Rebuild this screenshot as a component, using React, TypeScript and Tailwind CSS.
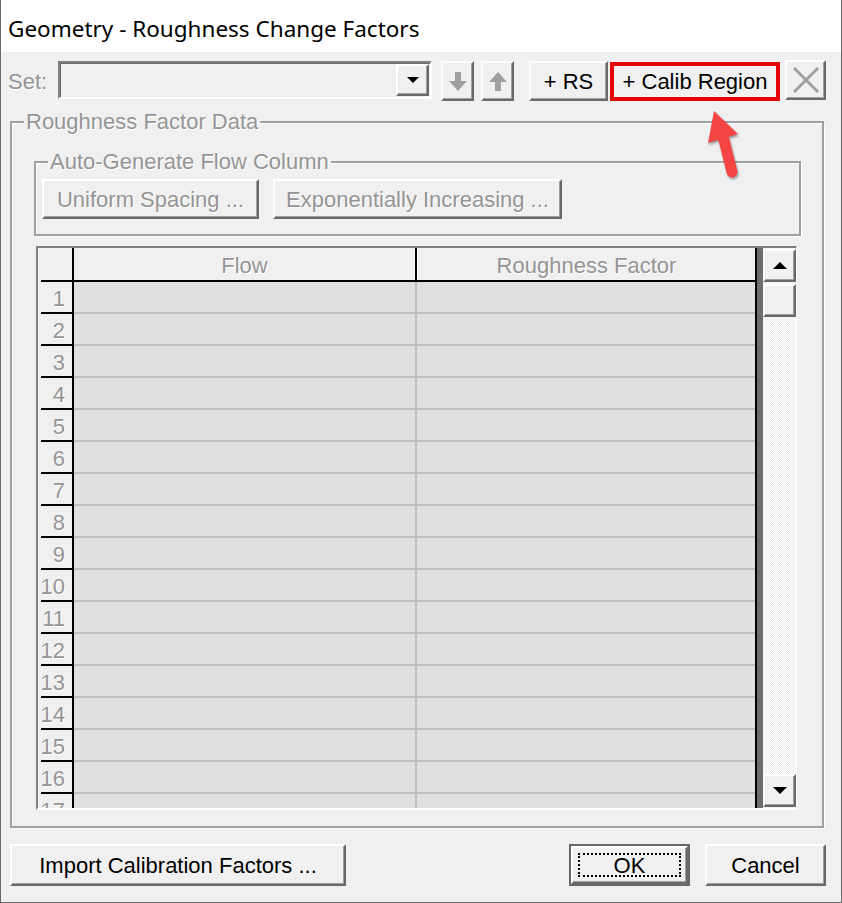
import type { ReactNode } from "react";

// Classic Win32 dialog: etched group boxes, 3D buttons, a disabled data grid.

const raised =
  "border-2 border-t-white border-l-white border-b-[#696969] border-r-[#696969] bg-[#f0f0f0] shadow-[inset_-1px_-1px_0_#a0a0a0]";

const dim = "text-[#959595] [text-shadow:1px_1px_0_#ffffff]";

function Btn({
  className = "",
  children,
}: {
  className?: string;
  children?: ReactNode;
}) {
  return (
    <div className={`flex items-center justify-center ${raised} ${className}`}>
      {children}
    </div>
  );
}

function Tri({ up = false, w = 14 }: { up?: boolean; w?: number }) {
  const h = Math.round(w / 2);
  return (
    <svg width={w} height={h} viewBox={`0 0 ${w} ${h}`}>
      <polygon
        points={up ? `0,${h} ${w},${h} ${w / 2},0` : `0,0 ${w},0 ${w / 2},${h}`}
        fill="#000"
      />
    </svg>
  );
}

function ArrowGlyph({ up = false }: { up?: boolean }) {
  return (
    <svg width="18" height="19" viewBox="0 0 18 19" className={up ? "rotate-180" : ""}>
      <rect x="6" y="0" width="6" height="10" fill="#a0a0a0" />
      <polygon points="0,9 18,9 9,19" fill="#a0a0a0" />
    </svg>
  );
}

function Legend({ children, ml }: { children: ReactNode; ml: string }) {
  return (
    <div
      className={`-mt-[13px] ${ml} self-start bg-[#f0f0f0] px-[2px] leading-[24px] ${dim}`}
    >
      {children}
    </div>
  );
}

const ROWS = Array.from({ length: 17 }, (_, i) => i + 1);

function DataGrid() {
  return (
    <div className="ml-[24px] mt-[10px] flex h-[564px] w-[761px] border-l-2 border-t-2 border-b-2 border-r border-l-[#808080] border-t-[#808080] border-b-white border-r-white">
      <div className="flex w-[717px] flex-col overflow-hidden">
        <div className="flex h-[32px] shrink-0 bg-[#f0f0f0]">
          <div className="w-[34px]" />
          <div className="w-[2px] bg-black" />
          <div className={`flex w-[341px] items-center justify-center pt-[3px] ${dim}`}>
            Flow
          </div>
          <div className="w-[2px] bg-black" />
          <div className="w-[1px] bg-white" />
          <div className={`flex w-[337px] items-center justify-center pt-[3px] ${dim}`}>
            Roughness Factor
          </div>
        </div>
        <div className="flex h-[2px] shrink-0">
          <div className="w-[3px] bg-[#f0f0f0]" />
          <div className="w-[714px] bg-black" />
        </div>
        {ROWS.map((n) => (
          <div key={n} className="flex h-[32px] shrink-0">
            <div className="flex w-[34px] flex-col">
              <div
                className={`flex h-[30px] items-center justify-end bg-[#f0f0f0] pr-[7px] pt-[2px] ${dim}`}
              >
                {n}
              </div>
              <div className="ml-[3px] h-[2px] bg-black" />
            </div>
            <div className="w-[2px] bg-black" />
            <div className="flex w-[341px] flex-col">
              <div className="h-[30px] bg-[#e0e0e0]" />
              <div className="h-[2px] bg-[#c0c0c0]" />
            </div>
            <div className="w-[2px] bg-[#c0c0c0]" />
            <div className="flex w-[338px] flex-col">
              <div className="h-[30px] bg-[#e0e0e0]" />
              <div className="h-[2px] bg-[#c0c0c0]" />
            </div>
          </div>
        ))}
      </div>
      <div className="w-[2px] bg-black" />
      <div className="w-[6px] bg-[#6d6d6d]" />
      <div className="flex w-[33px] flex-col bg-[repeating-conic-gradient(#ffffff_0%_25%,#ebebeb_0%_50%)] bg-[length:2px_2px]">
        <Btn className="mt-[1px] h-[33px]">
          <Tri up />
        </Btn>
        <Btn className="mt-[2px] h-[33px]" />
        <div className="flex-1" />
        <Btn className="mb-[1px] h-[33px]">
          <Tri />
        </Btn>
      </div>
    </div>
  );
}

export default function App() {
  return (
    <div className="relative flex h-[903px] w-[842px] flex-col overflow-hidden border-x border-b border-[#6b6b6b] bg-[#f0f0f0] font-['Liberation_Sans',Arial,sans-serif] text-[22px] text-black">
      <div className="flex h-[52px] shrink-0 items-center bg-white pl-[7px] pt-[5px] font-['Noto_Sans',sans-serif] text-[22.5px]">
        Geometry - Roughness Change Factors
      </div>

      {/* toolbar */}
      <div className="mt-[9px] flex h-[40px] items-start pl-[7px]">
        <div className={`flex h-[40px] w-[50px] items-center ${dim}`}>Set:</div>
        <div className="flex h-[38px] w-[374px] justify-end border-2 border-t-[#808080] border-l-[#808080] border-b-white border-r-white p-[1px] shadow-[inset_1px_1px_0_#696969]">
          <Btn className="w-[33px]">
            <Tri w={12} />
          </Btn>
        </div>
        <Btn className="ml-[9px] h-[40px] w-[33px]">
          <ArrowGlyph />
        </Btn>
        <Btn className="ml-[7px] h-[40px] w-[33px]">
          <ArrowGlyph up />
        </Btn>
        <Btn className="ml-[15px] h-[40px] w-[79px]">+ RS</Btn>
        <div className="ml-[2px] mt-[1px] flex h-[39px] w-[170px] items-center justify-center border-4 border-[#e5000a] bg-[#f0f0f0]">
          + Calib Region
        </div>
        <Btn className="-mt-[1px] ml-[5px] h-[40px] w-[41px]">
          <svg width="28" height="28" viewBox="0 0 28 28">
            <path d="M2 2 L26 26 M26 2 L2 26" stroke="#a0a0a0" strokeWidth="3" />
          </svg>
        </Btn>
      </div>

      {/* Roughness Factor Data */}
      <div className="ml-[9px] mt-[20px] flex h-[707px] w-[814px] flex-col border-2 border-[#a0a0a0] shadow-[inset_1px_1px_0_#ffffff,1px_1px_0_#ffffff]">
        <Legend ml="ml-[12px]">Roughness Factor Data</Legend>

        <div className="ml-[22px] mt-[27px] flex h-[75px] w-[767px] flex-col border-2 border-[#a0a0a0] shadow-[inset_1px_1px_0_#ffffff,1px_1px_0_#ffffff]">
          <Legend ml="ml-[12px]">Auto-Generate Flow Column</Legend>
          <div className="ml-[6px] mt-[5px] flex gap-[14px]">
            <Btn className={`h-[40px] w-[217px] ${dim}`}>Uniform Spacing ...</Btn>
            <Btn className={`h-[40px] w-[289px] ${dim}`}>
              Exponentially Increasing ...
            </Btn>
          </div>
        </div>

        <DataGrid />
      </div>

      {/* bottom buttons */}
      <div className="mt-[16px] flex pl-[9px] pr-[15px]">
        <Btn className="h-[42px] w-[336px]">Import Calibration Factors ...</Btn>
        <div className="ml-auto flex h-[42px] w-[121px] border-2 border-[#696969]">
          <div className={`flex flex-1 p-[5px] ${raised}`}>
            <div className="flex flex-1 items-center justify-center border-2 border-dotted border-black">
              OK
            </div>
          </div>
        </div>
        <Btn className="ml-[15px] h-[42px] w-[121px]">Cancel</Btn>
      </div>

      {/* callout arrow over the dialog */}
      <svg
        className="pointer-events-none absolute left-[699px] top-[104px] drop-shadow-[1px_2px_1px_rgba(0,0,0,0.35)]"
        width="50"
        height="80"
        viewBox="0 0 50 80"
      >
        <line x1="23" y1="32" x2="32" y2="68" stroke="#f44545" strokeWidth="11" strokeLinecap="round" />
        <polygon points="14,7 8,39 38,30" fill="#f44545" />
      </svg>
    </div>
  );
}
